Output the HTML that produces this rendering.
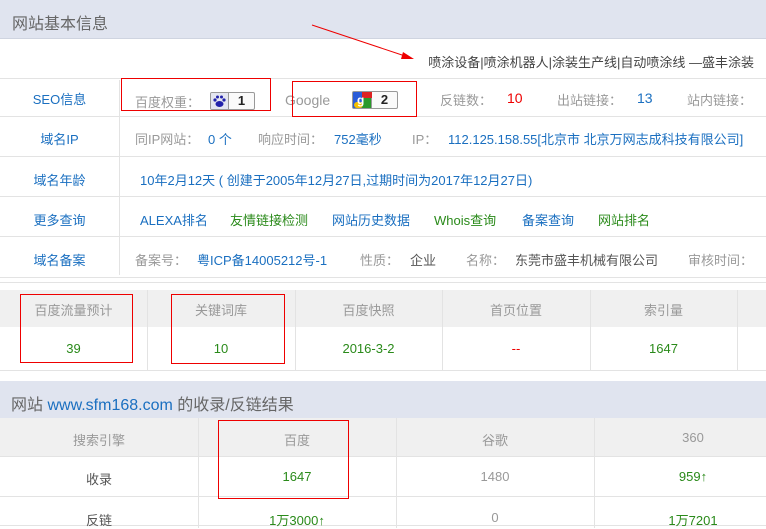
<!DOCTYPE html>
<html><head><meta charset="utf-8"><style>
*{margin:0;padding:0;box-sizing:border-box}
body{width:766px;height:528px;overflow:hidden;background:#fff;font-family:"Liberation Sans","Noto Sans CJK SC",sans-serif;font-size:13px;color:#999;position:relative}
.a{position:absolute;white-space:nowrap}
.b{color:#1a6fc0}.g{color:#2a8a1a}.r{color:#e00}.d{color:#555}
.hl{position:absolute;height:1px;background:#e3e3e3}
.vl{position:absolute;width:1px;background:#e3e3e3}
.box{position:absolute;border:1px solid #e00}
.badge{position:absolute;height:18px;border:1px solid #999;border-radius:2px;background:#fafafa;display:flex;font-weight:bold;color:#222;font-size:13px;overflow:hidden}
.badge span{display:block;text-align:center;line-height:16px}
.c{position:absolute;text-align:center}
</style></head><body>
<div class="a" style="left:0;top:0;width:766px;height:39px;background:#e0e4ef;border-bottom:1px solid #cfd4e0"></div>
<div class="a" style="left:12px;top:10px;font-size:16px;color:#666">网站基本信息</div>
<div class="a" style="right:12px;top:52px;font-size:13px;color:#444">喷涂设备|喷涂机器人|涂装生产线|自动喷涂线 —盛丰涂装</div>
<div class="hl" style="left:0;top:78px;width:766px"></div>
<div class="hl" style="left:0;top:116px;width:766px"></div>
<div class="hl" style="left:0;top:156px;width:766px"></div>
<div class="hl" style="left:0;top:196px;width:766px"></div>
<div class="hl" style="left:0;top:236px;width:766px"></div>
<div class="hl" style="left:0;top:277px;width:766px"></div>
<div class="hl" style="left:0;top:282px;width:766px"></div>
<div class="vl" style="left:119px;top:80px;height:195px"></div>
<div class="c b" style="left:0;width:119px;top:89px">SEO信息</div>
<div class="c b" style="left:0;width:119px;top:129px">域名IP</div>
<div class="c b" style="left:0;width:119px;top:170px">域名年龄</div>
<div class="c b" style="left:0;width:119px;top:210px">更多查询</div>
<div class="c b" style="left:0;width:119px;top:250px">域名备案</div>
<div class="a" style="left:135px;top:92px">百度权重：</div>
<div class="badge" style="left:210px;top:92px;width:45px"><span style="width:18px;background:#e4e6f0;border-right:1px solid #999"><svg width="17" height="16" viewBox="0 0 17 16"><ellipse cx="8.5" cy="11" rx="4" ry="3" fill="#22a"/><circle cx="4" cy="7" r="1.6" fill="#22a"/><circle cx="13" cy="7" r="1.6" fill="#22a"/><circle cx="6.5" cy="4" r="1.5" fill="#22a"/><circle cx="10.5" cy="4" r="1.5" fill="#22a"/></svg></span><span style="flex:1">1</span></div>
<div class="a" style="left:285px;top:92px;font-size:14px">Google</div>
<div class="badge" style="left:352px;top:91px;width:46px"><span style="width:19px;border-right:1px solid #999;position:relative;background:#2a9a2a"><i style="position:absolute;left:0;top:0;width:9px;height:16px;background:#2a5cd8"></i><i style="position:absolute;left:9px;top:0;width:10px;height:6px;background:#d22"></i><i style="position:absolute;left:1px;top:10px;width:9px;height:6px;border-radius:4px;background:#f5c000"></i><b style="position:absolute;left:4px;top:0;color:#fff;font-size:12px">g</b></span><span style="flex:1">2</span></div>
<div class="a" style="left:440px;top:90px">反链数：</div><div class="a r" style="left:507px;top:90px;font-size:14px">10</div>
<div class="a" style="left:557px;top:90px">出站链接：</div><div class="a b" style="left:637px;top:90px;font-size:14px">13</div>
<div class="a" style="left:687px;top:90px">站内链接：</div>
<div class="a" style="left:135px;top:129px">同IP网站：</div><div class="a b" style="left:208px;top:129px">0 个</div>
<div class="a" style="left:258px;top:129px">响应时间：</div><div class="a b" style="left:334px;top:129px">752毫秒</div>
<div class="a" style="left:412px;top:129px">IP：</div><div class="a b" style="left:448px;top:129px">112.125.158.55[北京市 北京万网志成科技有限公司]</div>
<div class="a b" style="left:140px;top:170px">10年2月12天 ( 创建于2005年12月27日,过期时间为2017年12月27日)</div>
<div class="a b" style="left:140px;top:210px">ALEXA排名</div>
<div class="a g" style="left:230px;top:210px">友情链接检测</div>
<div class="a b" style="left:332px;top:210px">网站历史数据</div>
<div class="a g" style="left:434px;top:210px">Whois查询</div>
<div class="a b" style="left:522px;top:210px">备案查询</div>
<div class="a g" style="left:598px;top:210px">网站排名</div>
<div class="a" style="left:135px;top:250px">备案号：</div><div class="a b" style="left:197px;top:250px">粤ICP备14005212号-1</div>
<div class="a" style="left:360px;top:250px">性质：</div><div class="a d" style="left:410px;top:250px">企业</div>
<div class="a" style="left:466px;top:250px">名称：</div><div class="a d" style="left:515px;top:250px">东莞市盛丰机械有限公司</div>
<div class="a" style="left:688px;top:250px">审核时间：</div>

<div class="a" style="left:0;top:290px;width:766px;height:37px;background:#f0f0f0"></div>
<div class="hl" style="left:0;top:370px;width:766px"></div>
<div class="vl" style="left:147px;top:290px;height:80px"></div>
<div class="vl" style="left:295px;top:290px;height:80px"></div>
<div class="vl" style="left:442px;top:290px;height:80px"></div>
<div class="vl" style="left:590px;top:290px;height:80px"></div>
<div class="vl" style="left:737px;top:290px;height:80px"></div>
<div class="c" style="left:0;width:147px;top:300px">百度流量预计</div>
<div class="c" style="left:147px;width:148px;top:300px">关键词库</div>
<div class="c" style="left:295px;width:147px;top:300px">百度快照</div>
<div class="c" style="left:442px;width:148px;top:300px">首页位置</div>
<div class="c" style="left:590px;width:147px;top:300px">索引量</div>
<div class="c g" style="left:0;width:147px;top:341px">39</div>
<div class="c g" style="left:147px;width:148px;top:341px">10</div>
<div class="c g" style="left:295px;width:147px;top:341px">2016-3-2</div>
<div class="c r" style="left:442px;width:148px;top:341px">--</div>
<div class="c g" style="left:590px;width:147px;top:341px">1647</div>

<div class="a" style="left:0;top:381px;width:766px;height:37px;background:#e0e4ef"></div>
<div class="a" style="left:11px;top:391px;font-size:16px;color:#666">网站 <span class="b">www.sfm168.com</span> 的收录/反链结果</div>
<div class="a" style="left:0;top:418px;width:766px;height:38px;background:#f0f0f0"></div>
<div class="hl" style="left:0;top:456px;width:766px"></div>
<div class="hl" style="left:0;top:496px;width:766px"></div>
<div class="hl" style="left:0;top:525px;width:766px"></div>
<div class="vl" style="left:198px;top:418px;height:110px"></div>
<div class="vl" style="left:396px;top:418px;height:110px"></div>
<div class="vl" style="left:594px;top:418px;height:110px"></div>
<div class="c" style="left:0;width:198px;top:430px">搜索引擎</div>
<div class="c" style="left:198px;width:198px;top:430px">百度</div>
<div class="c" style="left:396px;width:198px;top:430px">谷歌</div>
<div class="c" style="left:594px;width:198px;top:430px">360</div>
<div class="c d" style="left:0;width:198px;top:469px">收录</div>
<div class="c g" style="left:198px;width:198px;top:469px">1647</div>
<div class="c" style="left:396px;width:198px;top:469px">1480</div>
<div class="c g" style="left:594px;width:198px;top:469px">959<b>↑</b></div>
<div class="c d" style="left:0;width:198px;top:510px">反链</div>
<div class="c g" style="left:198px;width:198px;top:510px">1万3000<b>↑</b></div>
<div class="c" style="left:396px;width:198px;top:510px">0</div>
<div class="c g" style="left:594px;width:198px;top:510px">1万7201</div>

<div class="box" style="left:121px;top:78px;width:150px;height:33px"></div>
<div class="box" style="left:292px;top:81px;width:125px;height:36px"></div>
<div class="box" style="left:20px;top:294px;width:113px;height:69px"></div>
<div class="box" style="left:171px;top:294px;width:114px;height:70px"></div>
<div class="box" style="left:218px;top:420px;width:131px;height:79px"></div>
<svg class="a" style="left:0;top:0" width="766" height="528"><line x1="312" y1="25" x2="408" y2="57" stroke="#e00" stroke-width="1"/><polygon points="414,59 403,52 401,59" fill="#e00"/></svg>
</body></html>
